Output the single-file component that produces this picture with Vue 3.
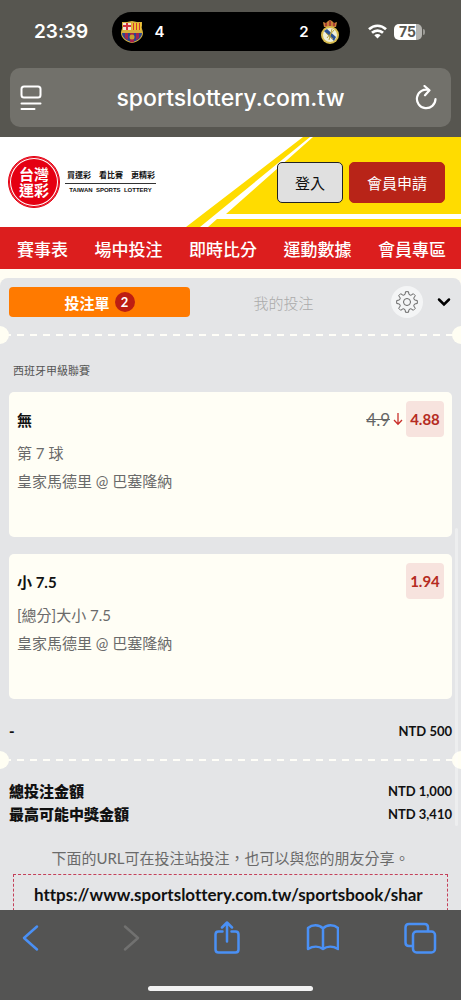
<template>
  <div class="phone">
    <header class="browser-top">
      <div class="status-bar">
        <span class="time">23:39</span>
        <div class="island">
          <span class="team">
            <svg width="24" height="24" viewBox="0 0 24 24">
              <path d="M2 2h5l5-1 5 1h5v4c-1 2 1 4 1 7 0 5-5 9-11 10C6 22 1 18 1 13c0-3 2-5 1-7z" fill="#d8b23c" />
              <path d="M3 3h8v7H3z" fill="#f3e6d8" />
              <path d="M6 3h2v7H6zM3 5h8v2H3z" fill="#d3323c" />
              <path d="M12 3h9v7h-9z" fill="#f0c02f" />
              <path d="M13 3h1v7h-1zM16 3h1v7h-1zM19 3h1v7h-1z" fill="#cf3a35" />
              <path d="M2 13h20c0 4-4 8-10 9-6-1-10-5-10-9z" fill="#2d4490" />
              <path d="M5 13h3v7l-3-2zM16 13h3v5l-3 2zM10 13h4v9l-2 .5-2-.5z" fill="#a3244e" />
              <circle cx="12" cy="17" r="2.5" fill="#c8a22c" />
            </svg>
            4
          </span>
          <span class="team">
            2
            <svg width="20" height="25" viewBox="0 0 20 25">
              <path d="M4 8 3 3l3 1 2-2 2-1 2 1 2 2 3-1-1 5z" fill="#c98238" />
              <path d="M6 4v3M10 2v5M14 4v3" stroke="#a32d35" stroke-width="1.5" />
              <circle cx="10" cy="16" r="9" fill="#d9bd4f" />
              <circle cx="10" cy="16" r="7" fill="#eef0dc" />
              <path d="m4 12 3-2 9 8-2 4z" fill="#2b5193" />
              <path d="M7 19c2-3 4-4 7-8M6 14l7 6M12 10l-3 11" stroke="#b9a33c" fill="none" />
            </svg>
          </span>
        </div>
        <div class="signals">
          <svg width="19" height="15" viewBox="0 0 19 15" fill="none" stroke="#fff" stroke-width="2.7">
            <path d="M1 5.2c5-4.600 12-4.600 17 0M4 8.800c3.200-3 7.800-3 11 0" />
            <path d="m6.300 11.300 3.200 3.200 3.200-3.200c-1.800-1.600-4.600-1.600-6.400 0z" fill="#fff" stroke="none" />
          </svg>
          <span class="battery">75</span>
        </div>
      </div>
      <div class="address">
        <button class="plain" aria-label="Page settings">
          <svg width="28" height="26" viewBox="0 0 28 26" fill="none" stroke="#fff" stroke-width="2" stroke-linecap="round">
            <rect x="1.5" y="1.5" width="19" height="11" rx="2.5" />
            <path d="M1.500 18.500h19M1.500 24h13" />
          </svg>
        </button>
        <button class="plain host">sportslottery.com.tw</button>
        <button class="plain" aria-label="Reload">
          <svg width="28" height="26" viewBox="-2 0 28 26" fill="none" stroke="#fff" stroke-width="2.2" stroke-linecap="round" stroke-linejoin="round">
            <path d="M14 5A9.300 9.300 0 1 0 20.500 14M9.500 1l5 4.300-4.500 5" />
          </svg>
        </button>
      </div>
    </header>

    <main class="site">
      <div class="masthead">
        <svg class="stripes" width="275" height="90" viewBox="0 0 275 90" fill="#ffdc00">
          <path d="M0 90 117 0h7L14 90zM40 77 127 0h148v77zM31 82h244v8H22z" />
        </svg>
        <div class="masthead-row">
          <a class="brand" href="#">
            <span class="seal">
              <span>台灣</span>
              <span>運彩</span>
            </span>
            <span class="brand-text">
              <span class="slogan"><b>買運彩</b><b>看比賽</b><b>更精彩</b></span>
              <span class="brand-en">TAIWAN&nbsp; SPORTS&nbsp; LOTTERY</span>
            </span>
          </a>
          <div class="actions">
            <button class="btn login">登入</button>
            <button class="btn register">會員申請</button>
          </div>
        </div>
      </div>

      <nav class="menu">
        <a v-for="item in menu" :key="item" href="#">{{ item }}</a>
      </nav>

      <section class="slip">
        <div class="tabs">
          <button class="tab active">投注單 <span class="count">{{ bets.length }}</span></button>
          <button class="tab">我的投注</button>
          <button class="gear" aria-label="設定">
            <svg width="22" height="22" viewBox="0 0 22 22" fill="none" stroke="#666" stroke-width="1">
              <path :d="gearPath" stroke-linejoin="round" />
              <circle cx="11" cy="11" r="3.5" />
            </svg>
          </button>
          <button class="plain fold" aria-label="收合">
            <svg width="14" height="10" viewBox="0 0 14 10" fill="none" stroke="#000" stroke-width="2.5" stroke-linecap="round">
              <path d="m2 2.500 5 5 5-5" />
            </svg>
          </button>
        </div>
        <div class="tear"></div>

        <h2 class="league">西班牙甲級聯賽</h2>
        <article v-for="bet in bets" :key="bet.pick" class="bet">
          <div class="bet-head">
            <h3>{{ bet.pick }}</h3>
            <div class="price">
              <template v-if="bet.oldOdds">
                <s>{{ bet.oldOdds }}</s>
                <svg width="10" height="14" viewBox="0 0 10 14" fill="none" stroke="#c9302c" stroke-width="1.3">
                  <path d="M5 1v11M1 8l4 4.300L9 8" />
                </svg>
              </template>
              <span class="odds">{{ bet.odds }}</span>
            </div>
          </div>
          <p>{{ bet.market }}</p>
          <p>{{ bet.match }}</p>
        </article>

        <div class="row stake"><b>-</b><span>NTD 500</span></div>
        <div class="tear"></div>
        <div class="totals">
          <div class="row"><b>總投注金額</b><span>NTD 1,000</span></div>
          <div class="row"><b>最高可能中獎金額</b><span>NTD 3,410</span></div>
        </div>
        <p class="hint">下面的URL可在投注站投注，也可以與您的朋友分享。</p>
        <a class="share-url" href="#">https://www.sportslottery.com.tw/sportsbook/shar</a>
        <span class="scroll-thumb"></span>
      </section>
    </main>

    <footer class="browser-bottom">
      <div class="toolbar">
        <button class="plain" aria-label="Back">
          <svg width="32" height="34" viewBox="0 0 32 34"><path d="M19 5.500 6 17l13 11.500" /></svg>
        </button>
        <button class="plain" aria-label="Forward" disabled>
          <svg width="32" height="34" viewBox="0 0 32 34"><path d="M11 5.500 24 17 11 28.500" /></svg>
        </button>
        <button class="plain" aria-label="Share">
          <svg width="32" height="34" viewBox="0 0 32 34">
            <path d="M12.500 10.500h-4q-3 0-3 3v15q0 3 3 3h17q3 0 3-3v-15q0-3-3-3h-4M17 20.500V2M12 6.500l5-5 5 5" />
          </svg>
        </button>
        <button class="plain" aria-label="Bookmarks">
          <svg width="34" height="34" viewBox="0 0 34 34">
            <path d="M18 7.500C14 3 7 3.500 3 7v21c5-3 11-3 15 0 4-3 10-3 15 0V7c-4-3.500-11-4-15 .5zM18 7.500V28" />
          </svg>
        </button>
        <button class="plain" aria-label="Tabs">
          <svg width="34" height="34" viewBox="0 0 34 34">
            <rect x="10" y="10.5" width="22" height="21" rx="3.5" />
            <path d="M9.500 25H6q-3.500 0-3.500-3.500v-15Q2.500 3 6 3h15.500Q25 3 25 6.500V10" />
          </svg>
        </button>
      </div>
      <div class="home-bar"></div>
    </footer>
  </div>
</template>

<script setup>
const menu = ["賽事表", "場中投注", "即時比分", "運動數據", "會員專區"];

const bets = [
  {
    pick: "無",
    oldOdds: "4.9",
    odds: "4.88",
    market: "第 7 球",
    match: "皇家馬德里 @ 巴塞隆納",
  },
  {
    pick: "小 7.5",
    oldOdds: null,
    odds: "1.94",
    market: "[總分]大小 7.5",
    match: "皇家馬德里 @ 巴塞隆納",
  },
];

// eight teeth, four points each
function buildGear(cx, cy, outer, inner) {
  const points = [];
  for (let i = 0; i < 8; i++) {
    const a = (i * Math.PI) / 4;
    [
      [-0.26, inner],
      [-0.14, outer],
      [0.14, outer],
      [0.26, inner],
    ].forEach(([d, r]) => {
      points.push(
        `${(cx + r * Math.cos(a + d)).toFixed(1)} ${(cy + r * Math.sin(a + d)).toFixed(1)}`
      );
    });
  }
  return `M${points.join("L")}Z`;
}

const gearPath = buildGear(11, 11, 10.4, 7.8);
</script>

<style>
body {
  margin: 0;
}
</style>

<style scoped>
* {
  box-sizing: border-box;
}

.phone {
  display: flex;
  flex-direction: column;
  height: 100vh;
  background: #fffdf3;
  font-family: Lato, "Noto Sans CJK TC", sans-serif;
  font-variant-ligatures: none;
  color: #111;
}

button {
  font-family: inherit;
  cursor: pointer;
}

a {
  color: inherit;
  text-decoration: none;
}

svg {
  display: block;
  flex-shrink: 0;
}

.plain {
  padding: 0;
  border: 0;
  background: none;
  color: inherit;
}

/* Browser top */
.browser-top {
  flex-shrink: 0;
  padding: 12px 10px 10px;
  background: #575650;
  color: #fff;
  font-family: Inter, sans-serif;
}

.status-bar {
  display: grid;
  grid-template-columns: 1fr 238px 1fr;
  align-items: center;
  margin-bottom: 17px;
}

.time {
  padding-left: 24px;
  font-size: 19px;
  font-weight: 600;
}

.island {
  display: flex;
  align-items: center;
  justify-content: space-between;
  height: 39px;
  padding: 0 10px 0 8px;
  border-radius: 20px;
  background: #000;
}

.team {
  display: flex;
  align-items: center;
  gap: 11px;
  font-size: 15px;
  font-weight: 600;
}

.signals {
  display: flex;
  align-items: center;
  gap: 7px;
  padding-left: 18px;
}

.battery {
  position: relative;
  width: 28px;
  border-radius: 5px;
  background: linear-gradient(90deg, #fff 78%, #b5b4b0 78%);
  color: #575650;
  font-size: 14px;
  font-weight: 700;
  line-height: 16px;
  text-align: center;
}

.battery::after {
  content: "";
  position: absolute;
  top: 5px;
  right: -3px;
  width: 2px;
  height: 6px;
  border-radius: 0 2px 2px 0;
  background: #9b9a95;
}

.address {
  display: flex;
  align-items: center;
  justify-content: space-between;
  height: 59px;
  padding: 0 10px;
  border-radius: 10px;
  background: #72716b;
}

.host {
  font-size: 23px;
  font-weight: 500;
}

/* Site header */
.site {
  display: flex;
  flex: 1;
  flex-direction: column;
  min-height: 0;
}

.masthead {
  display: grid;
  flex-shrink: 0;
  background: #fff;
}

.stripes,
.masthead-row {
  grid-area: 1 / 1;
}

.stripes {
  justify-self: end;
}

.masthead-row {
  z-index: 1;
  display: flex;
  align-items: center;
  justify-content: space-between;
  padding: 0 16px 0 8px;
}

.brand {
  display: flex;
  align-items: center;
  gap: 5px;
}

.seal {
  display: flex;
  flex-direction: column;
  align-items: center;
  justify-content: center;
  width: 52px;
  height: 52px;
  border: 1px solid #e50012;
  border-radius: 50%;
  background: #e50012;
  box-shadow: inset 0 0 0 1px #e50012, inset 0 0 0 2px #fff;
  color: #fff;
  font-size: 15px;
  font-weight: 700;
  line-height: 16px;
}

.brand-text {
  display: flex;
  flex-direction: column;
  width: 91px;
}

.slogan {
  display: flex;
  justify-content: space-between;
  padding: 0 1px 2px 2px;
  border-bottom: 1px solid #333;
  font-size: 8px;
  line-height: 12px;
}

.brand-en {
  font-family: "Liberation Sans", sans-serif;
  font-size: 6px;
  font-weight: 700;
  line-height: 12px;
  text-align: center;
  white-space: nowrap;
}

.actions {
  display: flex;
  gap: 6px;
}

.btn {
  height: 41px;
  padding: 0 17px;
  border: 1px solid #222;
  border-radius: 5px;
  background: #e0e0e0;
  color: #111;
  font-size: 15px;
}

.btn.register {
  border-color: #b82418;
  background: #b82418;
  color: #fff;
}

.menu {
  display: flex;
  flex-shrink: 0;
  align-items: center;
  justify-content: space-between;
  height: 42px;
  padding: 0 15px 0 17px;
  background: #dc1e1e;
  color: #fff;
  font-size: 17px;
  font-weight: 500;
}

/* Bet slip */
.slip {
  position: relative;
  flex: 1;
  min-height: 0;
  margin-top: 9px;
  padding: 9px 9px 0;
  overflow: hidden;
  border-radius: 8px 8px 0 0;
  background: #e4e5e7;
}

.tabs {
  display: flex;
  align-items: center;
}

.tab {
  display: flex;
  flex: 1;
  align-items: center;
  justify-content: center;
  gap: 5px;
  height: 30px;
  padding: 0;
  border: 0;
  border-radius: 4px;
  background: none;
  color: #aaa;
  font-size: 15px;
  font-weight: 300;
}

.tab.active {
  margin-right: 3px;
  background: #ff7a00;
  color: #fff;
  font-weight: 700;
}

.count {
  width: 20px;
  border-radius: 50%;
  background: #bd1e12;
  font-size: 13px;
  line-height: 20px;
}

.gear {
  display: flex;
  align-items: center;
  justify-content: center;
  width: 32px;
  height: 32px;
  margin: -1px 14px -1px 17px;
  padding: 0;
  border: 0;
  border-radius: 50%;
  background: #f4f5f6;
}

.fold {
  margin-right: 1px;
}

/* Perforated line, its end circles are cut by the slip's edges */
.tear {
  display: flex;
  align-items: center;
  justify-content: space-between;
  height: 18px;
  margin: 9px -18px 0;
  background: repeating-linear-gradient(90deg, #fffef8 0 7px, transparent 7px 13px) center / 100% 2px no-repeat;
}

.tear::before,
.tear::after {
  content: "";
  width: 18px;
  height: 18px;
  border-radius: 50%;
  background: #fffef3;
}

.league {
  margin: 16px 4px 11px;
  color: #555;
  font-size: 11px;
  font-weight: 400;
  line-height: 21px;
}

.bet {
  min-height: 145px;
  margin-bottom: 17px;
  padding: 9px 8px;
  border-radius: 5px;
  background: #fffef5;
}

.bet-head {
  display: flex;
  align-items: center;
  justify-content: space-between;
  margin-bottom: 2px;
}

.bet h3 {
  margin: 0;
  font-size: 15px;
  font-weight: 700;
}

.bet p {
  margin: 0;
  color: #6a6a6a;
  font-size: 15px;
  line-height: 28px;
}

.price {
  display: flex;
  align-items: center;
  gap: 3px;
}

.price s {
  color: #666;
  font-size: 17px;
}

.odds {
  width: 38px;
  border-radius: 4px;
  background: #f7e3de;
  color: #b52b22;
  font-size: 15px;
  font-weight: 700;
  line-height: 36px;
  text-align: center;
}

.row {
  display: flex;
  align-items: center;
  justify-content: space-between;
  font-size: 13px;
  font-weight: 700;
  line-height: 23px;
}

.row b {
  font-size: 15px;
}

.stake {
  padding-top: 5px;
  line-height: 21px;
}

.totals {
  padding-top: 11px;
}

.hint {
  margin: 18px 0 2px;
  color: #6a6a6a;
  font-size: 15px;
  line-height: 28px;
  text-align: center;
}

.share-url {
  display: block;
  margin: 0 4px;
  padding: 0 20px;
  overflow: hidden;
  border: 1px dashed #c4405a;
  font-size: 17px;
  font-weight: 700;
  line-height: 40px;
  white-space: nowrap;
}

.scroll-thumb {
  position: absolute;
  top: 250px;
  right: 3px;
  width: 3px;
  height: 298px;
  border-radius: 2px;
  background: rgba(255, 255, 255, 0.35);
}

/* Browser bottom */
.browser-bottom {
  flex-shrink: 0;
  padding: 11px 0 9px;
  background: #545453;
}

.toolbar {
  display: flex;
  justify-content: space-between;
  margin-bottom: 31px;
  padding: 0 24px 0 18px;
}

.toolbar svg {
  fill: none;
  stroke: #4a90f5;
  stroke-width: 2.5;
  stroke-linecap: round;
  stroke-linejoin: round;
}

.toolbar button:disabled svg {
  stroke: #717170;
}

.home-bar {
  width: 165px;
  height: 5px;
  margin: 0 auto;
  border-radius: 3px;
  background: #f2f2f2;
}
</style>
